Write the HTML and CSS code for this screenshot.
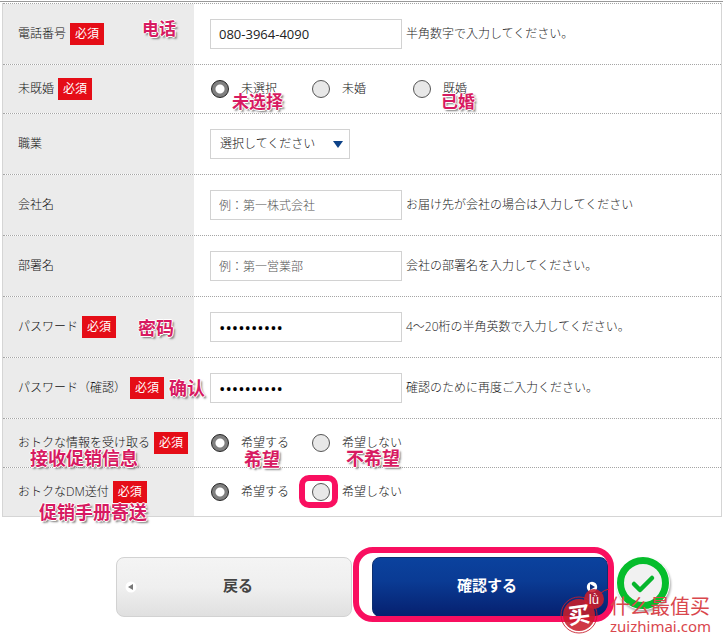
FILE: index.html
```html
<!DOCTYPE html>
<html lang="ja">
<head>
<meta charset="utf-8">
<meta name="viewport" content="width=device-width, initial-scale=1">
<title>会員情報入力</title>
<link rel="stylesheet" href="styles.css">
</head>
<body>
<form class="entry">
  <div class="rows">
    <div class="row">
      <div class="head"><label for="tel">電話番号</label><span class="must">必須</span></div>
      <div class="field"><input class="text" id="tel" type="tel" value="080-3964-4090"><span class="hint">半角数字で入力してください。</span></div>
      <span class="note small note-tel" lang="zh">电话</span>
    </div>
    <div class="row">
      <div class="head"><span id="marital">未既婚</span><span class="must">必須</span></div>
      <div class="field" role="radiogroup" aria-labelledby="marital">
        <label class="choice"><input type="radio" name="marital" checked>未選択</label>
        <label class="choice"><input type="radio" name="marital">未婚</label>
        <label class="choice"><input type="radio" name="marital">既婚</label>
      </div>
      <span class="note small note-unset" lang="zh">未选择</span>
      <span class="note small note-married" lang="zh">已婚</span>
    </div>
    <div class="row">
      <div class="head"><label for="job">職業</label></div>
      <div class="field">
        <span class="picker"><select id="job"><option>選択してください</option></select><svg width="10" height="7" viewBox="0 0 10 7"><path d="M0 0h10L5 7z" fill="#0d4288"/></svg></span>
      </div>
    </div>
    <div class="row">
      <div class="head"><label for="company">会社名</label></div>
      <div class="field"><input class="text" id="company" type="text" placeholder="例：第一株式会社"><span class="hint">お届け先が会社の場合は入力してください</span></div>
    </div>
    <div class="row">
      <div class="head"><label for="dept">部署名</label></div>
      <div class="field"><input class="text" id="dept" type="text" placeholder="例：第一営業部"><span class="hint">会社の部署名を入力してください。</span></div>
    </div>
    <div class="row">
      <div class="head"><label for="pass">パスワード</label><span class="must">必須</span></div>
      <div class="field"><input class="text" id="pass" type="password" value="abcd123456"><span class="hint">4～20桁の半角英数で入力してください。</span></div>
      <span class="note note-pass" lang="zh">密码</span>
    </div>
    <div class="row">
      <div class="head"><label for="pass2">パスワード（確認）</label><span class="must">必須</span></div>
      <div class="field"><input class="text" id="pass2" type="password" value="abcd123456"><span class="hint">確認のために再度ご入力ください。</span></div>
      <span class="note note-confirm" lang="zh">确认</span>
    </div>
    <div class="row">
      <div class="head"><span id="news">おトクな情報を受け取る</span><span class="must">必須</span></div>
      <div class="field" role="radiogroup" aria-labelledby="news">
        <label class="choice"><input type="radio" name="news" checked>希望する</label>
        <label class="choice"><input type="radio" name="news">希望しない</label>
      </div>
      <span class="note note-news" lang="zh">接收促销信息</span>
      <span class="note note-yes" lang="zh">希望</span>
      <span class="note note-no" lang="zh">不希望</span>
    </div>
    <div class="row">
      <div class="head"><span id="dm">おトクなDM送付</span><span class="must">必須</span></div>
      <div class="field" role="radiogroup" aria-labelledby="dm">
        <label class="choice"><input type="radio" name="dm" checked>希望する</label>
        <label class="choice marked"><input type="radio" name="dm">希望しない</label>
      </div>
      <span class="note note-dm" lang="zh">促销手册寄送</span>
    </div>
  </div>
  <div class="actions">
    <button class="btn back" type="button">戻る
      <svg class="arrow" width="12" height="12" viewBox="0 0 12 12"><circle cx="6" cy="6" r="5.5" fill="#fff"/><path d="M8 3v6L3 6z" fill="#777"/></svg>
    </button>
    <div class="primary">
      <button class="btn go" type="submit">確認する
        <svg class="arrow" width="12" height="12" viewBox="0 0 12 12"><circle cx="6" cy="6" r="5.2" fill="#fff"/><path d="M4 3v6l5-3z" fill="#0b2f7c"/></svg>
      </button>
      <span class="ring"></span>
      <svg class="check" width="60" height="60" viewBox="0 0 60 60">
        <circle cx="30" cy="30" r="27" fill="#fff"/>
        <circle cx="30" cy="30" r="22.5" fill="#f1f1f1" stroke="#06bd2c" stroke-width="7"/>
        <path d="M21 31l6 6 12-12" fill="none" stroke="#06b52c" stroke-width="4.5" stroke-linecap="round" stroke-linejoin="round"/>
      </svg>
      <div class="brand" lang="zh">
        <svg width="52" height="50" viewBox="0 0 52 50">
          <g fill="#c81e2b" fill-opacity=".88"><circle cx="21" cy="30" r="16"/><circle cx="36" cy="14" r="10"/></g>
          <circle cx="21" cy="30" r="18" fill="none" stroke="#c81e2b" stroke-opacity=".88"/>
          <path d="M43 8q3-3 8-4" fill="none" stroke="#c81e2b"/>
          <text class="seal" x="21" y="38" text-anchor="middle" transform="rotate(-8 21 30)">买</text>
          <text class="tone" x="36" y="19" text-anchor="middle">lǜ</text>
        </svg>
        <div class="brand-text"><span class="brand-name">什么最值买</span><span class="brand-url">zuizhimai.com</span></div>
      </div>
    </div>
  </div>
</form>
</body>
</html>
```
FILE: styles.css
```css
*, *::before { box-sizing: border-box; }
body {
  margin: 0;
  background: #fff;
  color: #111;
  font: 300 12px/18px "Open Sans", "Noto Sans CJK JP", sans-serif;
}
.entry {
  margin-top: 1px;
  padding: 1px 1px 0 2px;
  border-top: 1px solid #999;
}
.rows {
  border: 1px solid #d5d5d5;
  border-top: 0;
}
.row {
  position: relative;
  display: flex;
  border-top: 1px dotted #a5a5a5;
}
.head {
  display: flex;
  align-items: center;
  flex: 0 0 191px;
  gap: 4px;
  padding-left: 15px;
  background: #ebebeb;
  white-space: nowrap;
}
.must {
  padding: 0 5px;
  background: #e50d17;
  color: #fff;
  font-weight: 400;
  line-height: 22px;
}
.field {
  display: flex;
  align-items: center;
  flex: 1;
  min-width: 0;
  padding: 15px 15px;
}
.text {
  width: 192px;
  height: 30px;
  padding: 0 8px;
  border: 1px solid #d2d2d2;
  background: #fff;
  color: #222;
  font: 400 13px "Open Sans", "Noto Sans CJK JP", sans-serif;
}
.field {
  padding-left: 16px;
}
.text[type="password"] {
  color: #000;
  font-size: 17px;
}
.text::placeholder {
  color: #555;
  font-size: 12px;
  font-weight: 300;
}
.hint {
  margin-left: 4px;
  color: #222;
}
.choice {
  position: relative;
  display: flex;
  align-items: center;
  gap: 12px;
  width: 101px;
  white-space: nowrap;
}
.choice input {
  appearance: none;
  flex: none;
  width: 18px;
  height: 18px;
  margin: 0;
  border: 1px solid #555;
  border-radius: 50%;
  background: #e8e8e8;
}
.choice input:checked {
  border: 1px solid #222;
  background: radial-gradient(circle, #fff 4px, #808080 5px);
}
.choice {
  left: 1px;
}
.marked::before {
  content: "";
  position: absolute;
  left: -13px;
  top: -8px;
  width: 39px;
  height: 33px;
  border: 6px solid #f90f60;
  border-radius: 10px;
}
.picker {
  position: relative;
  display: flex;
}
.picker select {
  appearance: none;
  width: 140px;
  height: 30px;
  padding: 0 9px;
  border: 1px solid #d2d2d2;
  border-radius: 0;
  background: #fff;
  color: #111;
  font: inherit;
}
.picker svg {
  position: absolute;
  right: 7px;
  top: 12px;
  pointer-events: none;
}

/* Translated notes lying over the form */
.note {
  position: absolute;
  z-index: 1;
  color: #d71a61;
  font: 700 18px/20px "Noto Sans CJK SC", sans-serif;
  white-space: nowrap;
  text-shadow: 1px 0 #fff, -1px 0 #fff, 0 1px #fff, 0 -1px #fff, 2px 2px 2px #777;
}
.small { font-size: 17px; }
.note-tel { left: 139px; top: 14px; }
.note-unset { left: 229px; top: 26px; }
.note-married { left: 438px; top: 26px; }
.note-pass { left: 135px; top: 20px; }
.note-confirm { left: 166px; top: 19px; }
.note-news { left: 27px; top: 28px; }
.note-yes { left: 241px; top: 29px; }
.note-no { left: 343px; top: 28px; }
.note-dm { left: 36px; top: 33px; }

.actions {
  display: flex;
  justify-content: center;
  gap: 20px;
  padding: 40px 0 24px;
}
.primary {
  position: relative;
}
.btn {
  position: relative;
  width: 236px;
  height: 60px;
  padding: 0 0 5px;
  border-radius: 8px;
  font: 700 15px "Open Sans", "Noto Sans CJK JP", sans-serif;
}
.back {
  padding-left: 8px;
  border: 1px solid #d2d2d2;
  background: linear-gradient(#f4f4f4, #efefef 50%, #e0e0e0);
  color: #444;
}
.go {
  padding-right: 6px;
  border: 1px solid #0c2f70;
  background: linear-gradient(#0b429e, #0a3b94 40%, #06206f);
  color: #fff;
}
.arrow {
  position: absolute;
  top: 23px;
}
.back .arrow { left: 8px; }
.go .arrow { right: 9px; }
.ring {
  position: absolute;
  left: -19px;
  top: -10px;
  width: 261px;
  height: 75px;
  border: 6px solid #f90f60;
  border-radius: 20px;
  pointer-events: none;
}
.check {
  position: absolute;
  left: 241px;
  top: -4px;
  filter: drop-shadow(1px 2px 1px #aaa);
}
.brand {
  position: absolute;
  left: 186px;
  top: 28px;
  display: flex;
  color: #d9474d;
  pointer-events: none;
}
.brand svg {
  flex: none;
}
.brand-text {
  display: flex;
  flex-direction: column;
  padding-top: 10px;
  white-space: nowrap;
}
.brand-name {
  font: 400 20px/22px "Noto Sans CJK SC", sans-serif;
}
.brand-url {
  font: 400 15px/18px "Noto Sans", sans-serif;
}
.seal {
  fill: #fff;
  font: 700 22px "Noto Sans CJK SC", sans-serif;
}
.tone {
  fill: #fff;
  font: 400 12px "Noto Sans", sans-serif;
}
```
